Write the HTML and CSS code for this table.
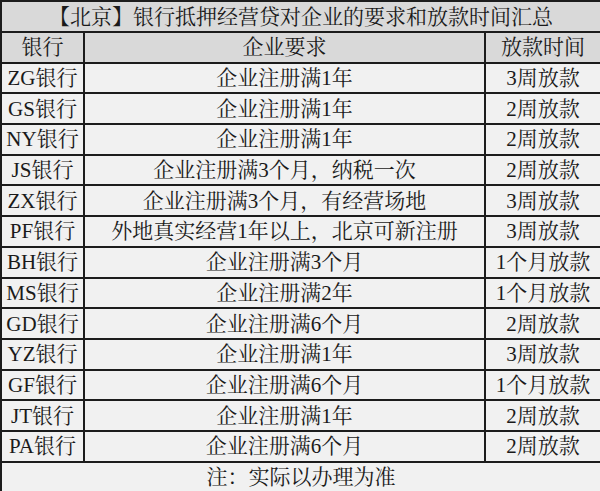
FILE: index.html
```html
<!DOCTYPE html>
<html lang="zh-CN">
<head>
<meta charset="utf-8">
<link rel="stylesheet" href="styles.css">
</head>
<body>
<table class="summary">
  <colgroup>
    <col class="c-bank">
    <col class="c-req">
    <col class="c-time">
  </colgroup>
  <tr class="title"><td colspan="3">【北京】银行抵押经营贷对企业的要求和放款时间汇总</td></tr>
  <tr class="head"><td>银行</td><td>企业要求</td><td>放款时间</td></tr>
  <tr><td>ZG银行</td><td>企业注册满1年</td><td>3周放款</td></tr>
  <tr><td>GS银行</td><td>企业注册满1年</td><td>2周放款</td></tr>
  <tr><td>NY银行</td><td>企业注册满1年</td><td>2周放款</td></tr>
  <tr><td>JS银行</td><td>企业注册满3个月，纳税一次</td><td>2周放款</td></tr>
  <tr><td>ZX银行</td><td>企业注册满3个月，有经营场地</td><td>3周放款</td></tr>
  <tr><td>PF银行</td><td>外地真实经营1年以上，北京可新注册</td><td>3周放款</td></tr>
  <tr><td>BH银行</td><td>企业注册满3个月</td><td>1个月放款</td></tr>
  <tr><td>MS银行</td><td>企业注册满2年</td><td>1个月放款</td></tr>
  <tr><td>GD银行</td><td>企业注册满6个月</td><td>2周放款</td></tr>
  <tr><td>YZ银行</td><td>企业注册满1年</td><td>3周放款</td></tr>
  <tr><td>GF银行</td><td>企业注册满6个月</td><td>1个月放款</td></tr>
  <tr><td>JT银行</td><td>企业注册满1年</td><td>2周放款</td></tr>
  <tr><td>PA银行</td><td>企业注册满6个月</td><td>2周放款</td></tr>
  <tr class="foot"><td colspan="3">注：实际以办理为准</td></tr>
</table>
</body>
</html>
```

FILE: styles.css
```css
html, body {
  margin: 0;
  padding: 0;
  background: #ffffff;
}

.summary {
  width: 600px;
  border-collapse: collapse;
  table-layout: fixed;
  font-family: "Liberation Serif", "Noto Serif CJK SC", "Noto Sans CJK SC", serif;
  font-size: 21px;
  color: #1a1a1a;
  margin: 0;
}

.c-bank { width: 83px; }
.c-req { width: 401px; }
.c-time { width: 116px; }

.summary td {
  border: 2px solid #1c1c1c;
  text-align: center;
  padding: 0;
  height: 28.7px;
  line-height: 24px;
  white-space: nowrap;
  background: #f1f1f1;
}

.summary tr.title td {
  height: 29px;
  background: #d9d9d9;
}

.summary tr.head td {
  background: #d9d9d9;
}

.summary tr.foot td {
  height: 28.5px;
  background: #f1f1f1;
}
```
